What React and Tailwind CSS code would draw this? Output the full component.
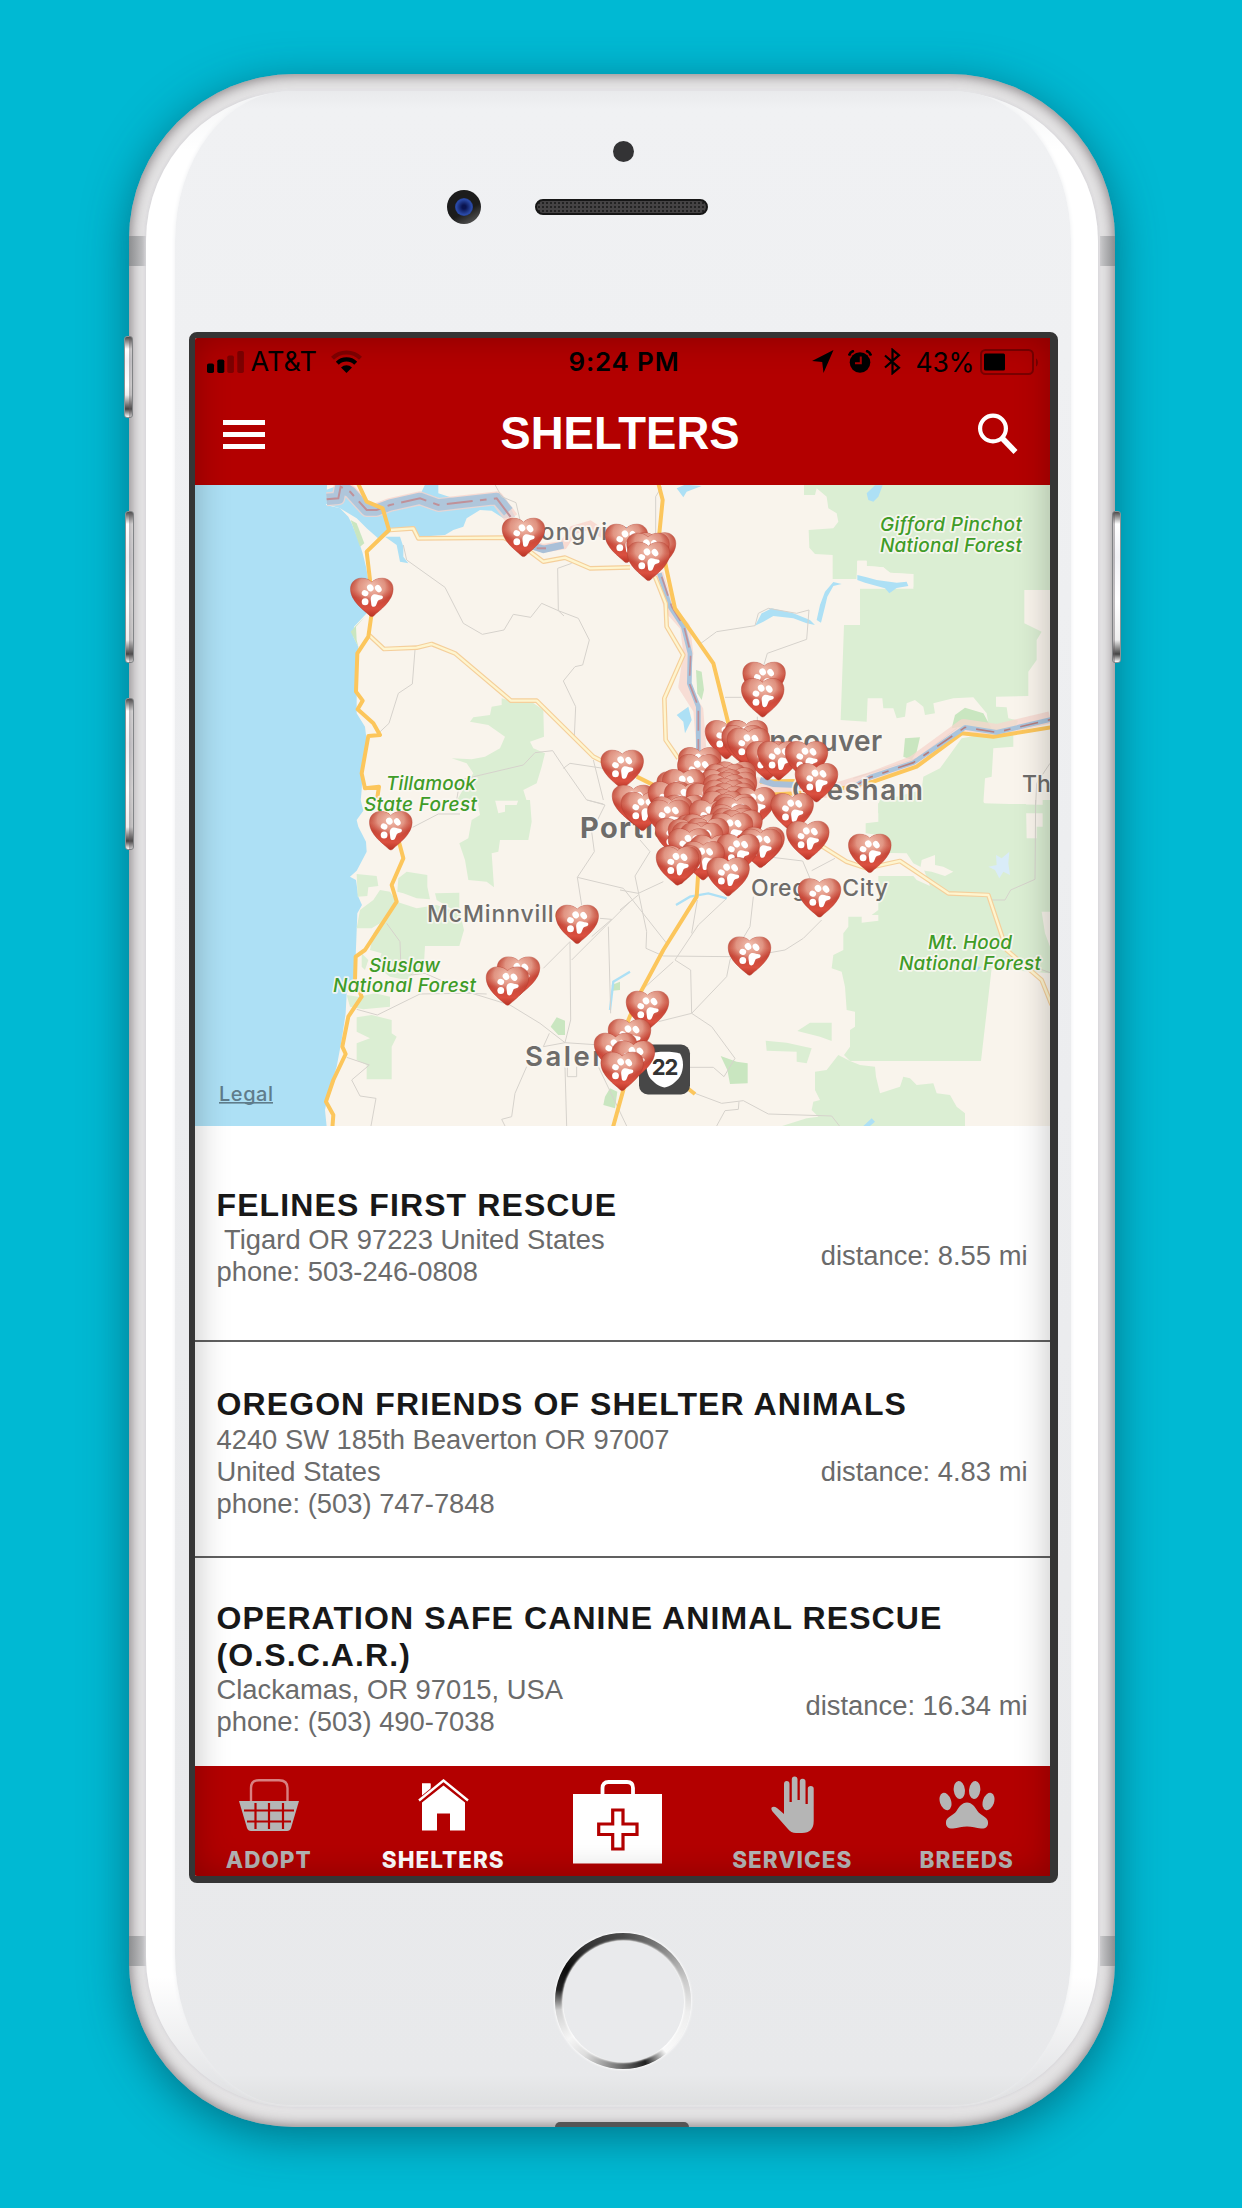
import React from "react";

const HEART =
  "M21.5 38.6C20.6 38.6 19.6 37.9 18.6 36.9C14 32.6 0.2 23 0.2 11.2C0.2 4.2 5 0.2 11.2 0.2C15.6 0.2 19 1.6 21.5 4.2C24 1.6 27.4 0.2 31.8 0.2C38 0.2 42.8 4.2 42.8 11.2C42.8 23 29 32.6 24.4 36.9C23.4 37.9 22.4 38.6 21.5 38.6Z";

// Left/top corner of every pin, in map coordinates, back to front.
const PINS = [
  [502, 518], [605, 524], [633, 532.5], [626.5, 533], [627, 542], [350.3, 578],
  [742.6, 662], [741.2, 678.4],
  [705, 720.3], [725, 720.3], [721.6, 725.3], [727, 728],
  [746, 741.3], [757.3, 741.3], [785, 741.3], [795, 763.3],
  [678.3, 747.4], [677.3, 754.3],
  [713, 761.5], [704, 764], [713, 767.5], [700, 769.5], [656.6, 771.5], [662.3, 769.3],
  [714, 772], [703, 774.5], [712, 778],
  [600.7, 750], [612, 785], [621, 792],
  [648, 781.6], [664, 782.6], [686, 783.3], [703, 780], [712, 783], [704, 786], [711, 789],
  [733, 787.3], [770.7, 793.3],
  [663, 795], [650, 796.6], [647.3, 800], [701, 791], [713, 794], [689, 800], [711, 800],
  [715, 797], [710, 804.5], [655, 818], [675, 815], [681, 814], [668, 819], [712, 808], [719.5, 810],
  [710, 813], [686, 818], [672, 822], [680, 823], [668, 828.5],
  [741.6, 827], [739, 829], [690, 835], [716.6, 834], [681.6, 841.3], [658.5, 845.5], [656, 846.6], [706.6, 857.3],
  [786.3, 821], [848.3, 834], [798, 878.5], [369.3, 811.3],
  [555.7, 905], [497, 956.7], [486, 966.7], [728, 936.7], [626, 991],
  [608, 1019], [594, 1033], [612, 1040.7], [600.7, 1052],
];

const SHELTERS = [
  {
    name: ["FELINES FIRST RESCUE"],
    address: ["\u00a0Tigard OR 97223 United States"],
    phone: "503-246-0808",
    distance: "8.55",
    box: "h-[216px] pt-[61px] border-b-2",
    body: "",
  },
  {
    name: ["OREGON FRIENDS OF SHELTER ANIMALS"],
    address: ["4240 SW 185th Beaverton OR 97007", "United States"],
    phone: "(503) 747-7848",
    distance: "4.83",
    box: "h-[216px] pt-[44px] border-b-2",
    body: "mt-px",
  },
  {
    name: ["OPERATION SAFE CANINE ANIMAL RESCUE", "(O.S.C.A.R.)"],
    address: ["Clackamas, OR 97015, USA"],
    phone: "(503) 490-7038",
    distance: "16.34",
    box: "h-[208px] pt-[42px]",
    body: "",
  },
];

function Pin({ x, y }) {
  return (
    <g transform={`translate(${x} ${y})`}>
      <path d={HEART} fill="url(#heart)" stroke="#b23a2c" strokeOpacity="0.55" strokeWidth="0.8" />
      <path d={HEART} fill="url(#gloss)" />
      <g fill="#fff">
        <ellipse cx="14.8" cy="15.2" rx="3.4" ry="3" transform="rotate(20 14.8 15.2)" />
        <ellipse cx="20" cy="9.8" rx="3.2" ry="3.6" transform="rotate(-30 20 9.8)" />
        <ellipse cx="28" cy="10.6" rx="3" ry="3.9" transform="rotate(-35 28 10.6)" />
        <ellipse cx="14.8" cy="23.8" rx="3.4" ry="3.5" />
        <path d="M21 18.500C22.500 15.600 25.500 16 28 17C30 17.600 32.600 17 32.600 19.200C32.600 21.400 29.600 21.400 28 22.400C26.400 23.600 26.600 28.600 23.600 28.800C21 29 21 26.400 20.800 24.400C20.600 22 20 20.600 21 18.500Z" />
      </g>
    </g>
  );
}

function Label({ x, y, w, size, weight = 600, fill = "#6e6c6a", italic, children }) {
  return (
    <text
      x={x}
      y={y}
      textLength={w}
      fontFamily="Inter, 'Liberation Sans', sans-serif"
      fontSize={size}
      fontWeight={weight}
      fontStyle={italic ? "italic" : "normal"}
      fill={fill}
      stroke="#fbf8f3"
      strokeOpacity="0.85"
      strokeWidth="3.5"
      strokeLinejoin="round"
      paintOrder="stroke"
    >
      {children}
    </text>
  );
}

function Forest({ x, y, w, children }) {
  return (
    <Label x={x} y={y} w={w} size="19" weight="500" italic fill="#3f9c28">
      {children}
    </Label>
  );
}

function Orange({ points }) {
  return <polyline points={points} fill="none" stroke="#fcc65c" strokeWidth="12" strokeLinejoin="round" />;
}

function Pale({ points }) {
  return (
    <g fill="none" strokeLinejoin="round">
      <polyline points={points} stroke="#f5cf9b" strokeWidth="14" />
      <polyline points={points} stroke="#fef5cf" strokeWidth="7" />
    </g>
  );
}

function ShelterMap() {
  const green = "#dbeed3";
  const darkGreen = "#c9e6c0";
  const water = "#ade0f5";
  return (
    <svg className="block h-[641px] w-[855px] shrink-0" viewBox="195 485 855 641">
      <defs>
        <linearGradient id="heart" x1="0" y1="0" x2="0" y2="1">
          <stop offset="0" stopColor="#b8402f" />
          <stop offset="0.3" stopColor="#cd5c4a" />
          <stop offset="0.5" stopColor="#c74637" />
          <stop offset="0.8" stopColor="#db5040" />
          <stop offset="1" stopColor="#b83224" />
        </linearGradient>
        <radialGradient id="gloss" cx="0.5" cy="0.22" r="0.52" gradientTransform="scale(1 0.92)">
          <stop offset="0" stopColor="#f6cdbd" stopOpacity="0.9" />
          <stop offset="0.6" stopColor="#efb7a5" stopOpacity="0.65" />
          <stop offset="1" stopColor="#e08070" stopOpacity="0" />
        </radialGradient>
      </defs>
      <rect x="195" y="485" width="855" height="641" fill="#f9f4ec" />

      {/* north-west */}
      <g transform="translate(190 480) scale(0.33333)">
        <polygon fill={water} points="0,0 412,0 408,75 450,85 475,110 485,130 505,180 518,220 528,260 535,300 530,400 492,440 490,470 505,500 500,640 500,700 525,740 530,780 520,830 515,930 512,962 0,962" />
        <polygon fill={water} points="408,30 450,14 480,14 530,75 590,80 640,50 690,45 705,14 745,14 745,40 800,58 930,40 950,60 975,110 940,115 905,92 870,90 830,115 820,140 790,150 765,165 690,170 668,140 610,150 570,180 530,145 500,115 450,85 408,72" />
        <polygon fill={water} points="585,170 630,170 640,200 640,230 655,250 630,245 620,195" />
        <polyline points="800,130 815,105 850,95" fill="none" stroke={water} strokeWidth="6" />
        <polyline points="410,58 445,55 452,20 480,35 530,90 560,90 600,75 690,55 745,75 920,55 965,115" fill="none" stroke="#f7d3cb" strokeOpacity="0.75" strokeWidth="42" strokeLinejoin="round" />
        <polyline points="410,58 445,55 452,20 480,35 530,90 560,90 600,75 690,55 745,75 920,55 955,95" fill="none" stroke="#a9c4dc" strokeOpacity="0.9" strokeWidth="34" strokeLinejoin="round" />
        <polyline points="410,58 445,55 452,20 480,35 530,90 560,90 600,75 690,55 745,75 920,55 965,115" fill="none" stroke="#c09199" strokeWidth="6" strokeDasharray="78 22 20 22" />
        <polyline points="1010,190 1060,205 1120,195 1150,150 1200,135 1280,190" fill="none" stroke="#f7d3cb" strokeOpacity="0.8" strokeWidth="26" />
        <polyline points="1020,195 1060,208 1120,195" fill="none" stroke="#a9c0d8" strokeWidth="22" />
        <polyline points="1040,205 1068,205" fill="none" stroke="#c09199" strokeWidth="6" />
        <polygon fill={darkGreen} points="482,120 500,130 523,190 510,200" />
        <polygon fill={darkGreen} points="525,410 495,440 482,455 505,500 500,480 498,440" />
        <polygon fill={green} points="935,655 960,662 1020,662 1060,690 1062,770 1020,785 1030,805 1065,820 1055,860 1040,910 1000,930 1010,962 800,962 830,910 850,880 830,850 785,835 845,838 885,830 930,805 945,770 895,735 840,725 850,712 900,705 905,680 935,675" />
        <g fill="none" stroke="#d6d2cc" strokeWidth="3">
          <polyline points="640,195 650,240 765,322 820,430 877,463 942,450 970,403 1022,412 1055,370 1105,392 1165,415 1198,480 1178,555 1155,560 1120,603 1157,680 1153,770" />
          <polyline points="1145,250 1103,265 1105,392 1122,408" />
          <polyline points="675,510 667,612 625,640 597,730 560,765" />
          <polyline points="800,960 810,900 860,888 1000,855 1035,818 1088,812 1120,860 1190,960 1240,972" />
          <polyline points="1120,865 1140,850 1240,865" />
          <polyline points="1210,840 1240,960" />
          <polyline points="915,14 935,50 978,68 990,120" />
        </g>
        <Pale points="600,150 670,145 685,175 940,173 1000,200 1060,245 1125,233 1200,265 1320,262" />
        <Pale points="537,465 582,507 680,503 725,492 795,520 963,662 1040,662 1210,830 1260,855" />
        <Orange points="503,8 530,65 578,85 597,150 530,215 540,300 545,400 535,470 502,520 498,635 518,662 503,688 550,730 570,765 535,768 515,880 525,925 567,920 560,965" />
      </g>

      {/* north-east */}
      <g transform="translate(620 480) scale(0.33333)">
        <polygon fill={green} points="552,12 1290,12 1290,330 1213,330 1213,430 1265,455 1250,480 1250,540 1225,575 1225,648 1128,650 1128,680 1160,682 1165,715 1195,722 1180,755 1180,800 1120,805 1115,890 1095,895 1090,970 1290,975 1290,1000 775,1000 775,970 830,950 905,930 910,890 960,865 1025,775 1110,760 1100,700 1060,652 1000,655 940,670 945,700 915,705 910,680 885,660 860,670 855,710 830,715 820,685 790,685 787,655 743,655 740,725 662,720 672,435 720,435 720,325 800,325 860,320 880,320 880,282 810,278 790,262 740,258 740,242 712,242 710,297 638,297 638,225 585,222 568,203 566,150 640,145 655,125 650,100 625,85 620,50 590,25 585,45 552,45" />
        <polygon fill={darkGreen} points="995,745 1005,705 1035,683 1090,700 1112,740 1120,755 1030,740" />
        <polygon fill={darkGreen} points="855,775 900,772 890,815 875,840 850,830" />
        <polygon fill={darkGreen} points="228,570 245,575 252,630 245,660 232,640" />
        <polygon fill={water} points="170,25 195,14 245,18 200,35 190,52" />
        <polygon fill={water} points="740,40 765,16 788,16 775,50 760,65 745,60" />
        <polygon fill="#f9f4ec" points="712,242 740,242 740,258 790,262 810,278 860,282 880,282 880,326 720,326 710,297" />
        <polygon fill={water} points="712,285 740,292 770,300 830,308 860,305 865,318 830,324 808,340 795,325 735,308 712,300" />
        <polygon fill={water} points="665,312 640,318 622,350 615,380 603,428 590,420 600,375 615,335 640,306" />
        <polygon fill={water} points="405,437 425,400 455,385 520,400 570,420 585,435 560,430 520,415 460,408 430,425" />
        <polygon fill={water} points="170,705 205,680 215,720 195,760 190,725" />
        <g fill="none" stroke="#d6d2cc" strokeWidth="3">
          <polyline points="107,160 107,50 125,20" />
          <polyline points="240,492 290,455 405,437 415,400 445,385 530,400 567,390 560,478 442,520 430,560" />
          <polyline points="315,652 365,652" />
          <polyline points="412,710 412,740" />
          <polyline points="700,895 890,835 1010,745" />
          <polyline points="1290,850 1250,910 1247,975" />
        </g>
        <polyline points="115,280 150,390 195,440 205,520 190,620 235,690 245,820" fill="none" stroke="#f6d6cd" strokeOpacity="0.75" strokeWidth="30" strokeLinejoin="round" />
        <polyline points="118,280 150,380 190,440 210,520 208,610 235,680 235,820" fill="none" stroke="#a9c4dc" strokeWidth="14" strokeLinejoin="round" />
        <polyline points="125,290 155,380 192,440 212,520 208,610 235,680 235,820" fill="none" stroke="#c09199" strokeWidth="5" strokeDasharray="60 25" />
        <Pale points="105,290 137,370 140,440 190,525 133,655 137,780 175,835" />
        <polyline points="380,900 430,915 520,930 620,935 750,895 880,845 1030,735 1130,750 1290,712" fill="none" stroke="#f6d6cd" strokeOpacity="0.75" strokeWidth="36" strokeLinejoin="round" />
        <Orange points="115,10 128,60 118,160 140,270 165,385 280,550 325,730 400,900 230,1160" />
        <Orange points="420,905 520,903 560,930" />
        <Orange points="420,945 620,935 760,905 890,860 1025,760 1120,770 1295,742" />
        <Orange points="50,890 110,920" />
        <polyline points="420,900 460,912 530,915 590,925" fill="none" stroke="#a9c0d8" strokeWidth="18" />
        <polyline points="710,915 750,892 880,848 1035,742 1130,757 1295,718" fill="none" stroke="#a9c4dc" strokeWidth="14" strokeLinejoin="round" />
        <polyline points="710,915 750,892 880,848 1035,742 1130,757 1295,718" fill="none" stroke="#b57f80" strokeWidth="5" strokeDasharray="55 30 20 30" />
      </g>

      {/* south-west */}
      <g transform="translate(190 800) scale(0.33333)">
        <polygon fill={water} points="0,0 512,0 520,32 500,60 505,80 528,125 530,155 512,190 500,212 480,230 498,240 505,290 516,315 502,340 497,470 490,540 470,580 467,640 455,720 440,800 415,880 405,930 410,980 0,980" />
        <polygon fill={green} points="862,0 915,0 925,40 945,35 945,15 980,15 985,0 1020,0 1025,65 1015,120 930,120 925,155 905,160 912,262 890,245 835,240 825,180 808,130 835,115 845,60 870,45" />
        <polygon fill={green} points="500,222 560,228 565,258 535,262 532,288 503,290" />
        <polygon fill={green} points="625,235 650,215 712,225 712,260 720,298 680,295 640,280 622,275" />
        <polygon fill={green} points="735,280 808,278 808,330 790,330 740,300" />
        <polygon fill={green} points="500,385 510,330 550,300 570,270 600,275 620,305 680,325 740,315 780,330 808,330 822,390 808,438 705,438 702,490 650,540 600,530 560,500 575,460 540,450 550,400 570,370 545,385" />
        <polygon fill={green} points="515,460 535,480 525,510 515,500" />
        <polygon fill={green} points="470,585 505,590 555,580 600,590 600,620 520,628 480,620" />
        <polygon fill={green} points="500,652 545,645 605,660 605,700 620,710 605,740 605,838 530,838 530,795 500,780 500,730 540,715 500,695" />
        <polygon fill={darkGreen} points="1082,680 1100,652 1125,662 1125,705 1105,705" />
        <polygon fill={darkGreen} points="1245,890 1260,865 1282,875 1275,925 1240,915" />
        <polygon fill={darkGreen} points="1265,555 1290,545 1290,570 1268,572" />
        <polyline points="1320,515 1270,545 1260,630" fill="none" stroke={water} strokeWidth="7" />
        <g fill="none" stroke="#d6d2cc" strokeWidth="3">
          <polyline points="668,82 745,42 810,42" />
          <polyline points="590,370 630,425 632,480 665,525 705,520 830,575 960,615 1050,670 1125,728 1230,735" />
          <polyline points="500,628 562,645 690,582 830,580 890,582" />
          <polyline points="470,772 538,795 485,840 510,888 558,895 543,978" />
          <polyline points="1192,0 1245,15 1205,95 1213,155 1162,232 1175,315" />
          <polyline points="1162,232 1300,265 1430,430" />
          <polyline points="1060,505 1140,425 1142,660 1125,728 1060,740 1078,700" />
          <polyline points="1320,305 1145,480" />
          <polyline points="1230,355 1265,358 1205,410" />
          <polyline points="1255,380 1262,640" />
          <polyline points="1010,800 975,880 965,950 935,958 945,978" />
          <polyline points="1125,800 1130,978" />
          <polyline points="1132,800 1132,830 1160,830 1160,800" />
          <polyline points="1225,800 1310,978" />
        </g>
        <Orange points="585,30 600,60 628,130 640,175 605,255 620,305 525,450 497,470 495,540 515,590 475,650 457,740 467,762 430,840 408,905 430,945 427,985" />
      </g>

      {/* south-east */}
      <g transform="translate(620 800) scale(0.33333)">
        <polygon fill={green} points="775,12 780,0 1085,0 1095,12 1218,12 1220,115 1250,115 1250,80 1268,80 1268,0 1290,0 1290,335 1265,335 1275,400 1290,440 1290,520 1115,505 1083,783 690,783 672,765 690,740 690,690 705,680 705,635 680,630 675,560 665,515 635,505 640,465 670,450 670,400 685,380 685,350 725,350 725,368 775,362 775,345 755,345 775,330 775,228 880,228 890,240 930,258 910,205 880,190 860,160 775,158 775,105 737,100 737,70 775,65" />
        <polygon fill="#f9f4ec" points="905,180 945,165 945,195 970,200 1000,215 975,228 935,215 900,210" />
        <polygon fill={green} points="655,765 690,783 720,795 765,800 768,830 780,880 840,860 850,830 870,835 890,855 940,850 950,880 990,885 1010,920 1035,940 1035,980 480,980 560,955 595,950 575,930 580,905 600,900 585,870 585,815 620,810" />
        <polygon fill={green} points="437,722 500,728 575,745 560,790 530,785 530,755 440,752" />
        <polygon fill={green} points="532,693 570,668 635,668 635,723 600,710" />
        <polygon fill={darkGreen} points="302,768 350,785 383,790 383,850 330,852 322,810" />
        <polygon fill="#d9ecf8" points="1105,200 1130,195 1128,165 1145,175 1168,155 1165,190 1170,225 1150,215 1138,235 1125,210" />
        <polygon fill={water} points="730,978 755,955 765,965 750,978" />
        <polygon fill={water} points="1050,500 1085,500 1070,515" />
        <g fill="none" stroke="#d6d2cc" strokeWidth="3">
          <polyline points="60,120 90,155 45,228 80,395 78,445 130,468 330,470" />
          <polyline points="0,270 55,280 130,245" />
          <polyline points="0,330 55,285" />
          <polyline points="320,295 235,375 165,480 212,510 215,640" />
          <polyline points="232,300 215,400" />
          <polyline points="60,575 160,485" />
          <polyline points="400,290 390,380 330,480 320,530 215,640 115,665" />
          <polyline points="215,640 275,680 345,775 312,830 280,802 210,802" />
          <polyline points="605,360 550,415 495,450 450,458" />
          <polyline points="440,170 548,183 570,235" />
          <polyline points="575,212 645,175" />
          <polyline points="1247,0 1245,238 1172,270 1155,300 1115,300" />
          <polyline points="225,880 305,910 370,902 445,942 635,948 660,980" />
          <polyline points="357,905 355,928 315,932 290,978" />
          <polyline points="1160,470 1290,518" />
        </g>
        <polyline points="168,315 210,290 265,280 320,295" fill="none" stroke={water} strokeWidth="7" />
        <Pale points="600,135 680,185 740,205 840,183 985,280 1105,285 1160,450 1265,540 1295,615" />
        <Orange points="236,200 230,290 130,450 60,580 25,660 10,870 -22,985" />
        <Orange points="190,855 225,882" />
      </g>

      <Label x="526" y="540" size="23" weight="500" w="116">Longview</Label>
      <Label x="734" y="751" size="28" w="148">Vancouver</Label>
      <Label x="792" y="800" size="28" w="131">Gresham</Label>
      <Label x="1022" y="792" size="23" weight="500">Th</Label>
      <Label x="751" y="896" size="23" weight="500" w="137">Oregon City</Label>
      <Label x="427" y="922" size="23" weight="500" w="141">McMinnville</Label>
      <Label x="525" y="1065.500" size="27.500" w="92">Salem</Label>
      <Label x="580" y="838" size="29" weight="700" w="130">Portland</Label>

      <Forest x="880" y="530.5" w="142">Gifford Pinchot</Forest>
      <Forest x="880" y="551.5" w="142">National Forest</Forest>
      <Forest x="386" y="790" w="90">Tillamook</Forest>
      <Forest x="364" y="810.5" w="113">State Forest</Forest>
      <Forest x="369" y="971.5" w="71">Siuslaw</Forest>
      <Forest x="333" y="992" w="143">National Forest</Forest>
      <Forest x="928" y="949" w="84">Mt. Hood</Forest>
      <Forest x="899" y="970" w="142">National Forest</Forest>

      <text x="219" y="1101" textLength="54" fontFamily="Inter, sans-serif" fontSize="20" fontWeight="500" fill="#5f7c8b">Legal</text>
      <rect x="219" y="1102" width="54" height="1.600" fill="#5f7c8b" />

      <rect x="639" y="1044.500" width="51" height="50" rx="9" fill="#474747" />
      <path d="M650 1053.500C656 1051 674 1051 680 1053.500C684 1059.500 684 1069.500 680 1076.500C676 1082.500 670 1086.500 664.500 1087.500C659 1086.500 653 1082.500 649 1076.500C645.500 1069.500 645.500 1059.500 650 1053.500Z" fill="#fff" />
      <text x="664.5" y="1075" textAnchor="middle" fontFamily="Inter, sans-serif" fontSize="22" fontWeight="700" letterSpacing="-1" fill="#333">22</text>

      {PINS.map(([x, y], i) => (
        <Pin key={i} x={x} y={y} />
      ))}
    </svg>
  );
}

function StatusBar() {
  return (
    <div className="flex h-[37px] items-center pt-[10px] pl-[12px] pr-[10px] font-[Inter,sans-serif] text-[26px] leading-[30px] text-black">
      <div className="flex w-[300px] items-center">
        <svg className="h-[22px] w-[38px]" viewBox="0 0 38 22">
          <rect x="0" y="12.500" width="7" height="9.500" rx="1.800" />
          <rect x="10.300" y="8.500" width="7" height="13.500" rx="1.800" />
          <rect x="20.300" y="4.500" width="6.600" height="17.500" rx="1.800" fill="#7d0000" />
          <rect x="30.300" y="0" width="6.600" height="22" rx="1.800" fill="#7d0000" />
        </svg>
        <span className="ml-[6px] w-[67px] text-[27px] tracking-[0.100px]">AT&amp;T</span>
        <svg className="ml-[13px] h-[23px] w-[31px]" viewBox="0 0 31 23" fill="none">
          <path d="M1.500 8.200A20 20 0 0 1 29.500 8.200" stroke="#800000" strokeWidth="4.200" />
          <path d="M6.300 13.200A13 13 0 0 1 24.700 13.200" stroke="#000" strokeWidth="4.200" />
          <path d="M15.500 23L10 17.500A8 8 0 0 1 21 17.500Z" fill="#000" />
        </svg>
      </div>
      <span className="ml-[62px] w-[120px] whitespace-nowrap font-semibold tracking-[0.800px]">9:24 PM</span>
      <div className="ml-auto flex items-center">
        <svg className="h-[23px] w-[22px]" viewBox="0 0 22 23"><path d="M21.500 0L11.500 23L10.200 12L0 11Z" /></svg>
        <svg className="ml-[14px] h-[23px] w-[24px]" viewBox="0 0 24 23">
          <circle cx="12" cy="12.500" r="10.300" />
          <path d="M1 5.500A7 7 0 0 1 6 0.800M23 5.500A7 7 0 0 0 18 0.800" fill="none" stroke="#000" strokeWidth="2.600" />
          <path d="M12.800 6.500V13.200H7" fill="none" stroke="#a80000" strokeWidth="2" />
        </svg>
        <svg className="ml-[12px] h-[27px] w-[17px]" viewBox="0 0 17 27">
          <path d="M1 7.500L15 19.800L8.500 25.200V1.800L15 7.200L1 19.500" fill="none" stroke="#000" strokeWidth="2.200" />
        </svg>
        <span className="ml-[15px] w-[59px] text-[26.500px] tracking-[-0.200px]">43%</span>
        <svg className="ml-[5px] h-[26px] w-[60px]" viewBox="0 0 60 26">
          <rect x="1" y="1" width="52" height="24" rx="4.500" fill="none" stroke="#7a0000" strokeWidth="2" />
          <rect x="4" y="4.500" width="21" height="17" rx="1.500" />
          <path d="M56 9.500C58.500 10.500 58.500 16.500 56 17.500Z" fill="#7a0000" />
        </svg>
      </div>
    </div>
  );
}

function Header() {
  return (
    <header className="h-[147px] shrink-0 bg-[#b30000]">
      <StatusBar />
      <div className="flex h-[110px] items-center justify-between pt-[8px] pr-[31px] pl-[28px]">
        <div className="flex w-[42px] flex-col gap-[7px]">
          <span className="h-[5px] bg-white" />
          <span className="h-[5px] bg-white" />
          <span className="h-[5px] bg-white" />
        </div>
        <h1 className="mr-[2px] pb-px text-[45.500px] leading-[50px] font-bold text-white">SHELTERS</h1>
        <svg className="mb-[3px] h-[42px] w-[41px]" viewBox="0 0 41 42" fill="none" stroke="#fff">
          <circle cx="16" cy="16.500" r="12.900" strokeWidth="4.200" />
          <path d="M25.500 26.500L38.500 40" strokeWidth="5.600" />
        </svg>
      </div>
    </header>
  );
}

function ShelterRow({ name, address, phone, distance, box, body }) {
  return (
    <li className={`${box} shrink-0 border-[#606060] px-[22px]`}>
      <h2 className="text-[32px] leading-[37px] font-bold tracking-[1.100px] text-[#181818]">
        {name.map((line) => (
          <span key={line} className="block whitespace-nowrap">{line}</span>
        ))}
      </h2>
      <div className={`${body} flex items-center justify-between text-[27.350px] leading-[32px] text-[#6b6b6b]`}>
        <div>
          {address.map((line) => (
            <p key={line} className="whitespace-nowrap">{line}</p>
          ))}
          <p>phone: {phone}</p>
        </div>
        <p>distance: {distance} mi</p>
      </div>
    </li>
  );
}

function BasketIcon() {
  return (
    <svg className="h-[53px] w-[60px]" viewBox="0 0 60 53">
      <path d="M12 23V9Q12 1.200 20 1.200H40Q48.500 1.200 48.500 9V23" fill="none" stroke="#d88080" strokeWidth="2.400" />
      <path d="M0 22H60L52 49Q51 52 48 52H12Q9 52 8 49Z" fill="#b5b5b5" />
      <path d="M5 31.500H55M8 42.500H52M16.500 24V50M30 24V50M44 24V50" stroke="#b30000" strokeWidth="2.200" />
    </svg>
  );
}

function HouseIcon() {
  return (
    <svg className="h-[52px] w-[51px]" viewBox="0 0 51 52" fill="#fff">
      <path d="M4 23.500L25.500 6.500L47 23.500V51.500H32V34.500H19V51.500H4Z" />
      <path d="M4 4.500H12.500V11L4 18Z" />
      <path d="M1 21.500L25.500 1.500L50 21.500" fill="none" stroke="#b30000" strokeWidth="5.500" />
      <path d="M1 21.500L25.500 1.500L50 21.500" fill="none" stroke="#fff" strokeWidth="2.400" />
      <path d="M4 4.500H12.500V9.500L4 16.500Z" />
    </svg>
  );
}

function HandIcon() {
  return (
    <svg className="h-[58px] w-[43px]" viewBox="0 0 43 58" fill="#b5b5b5">
      <path d="M13 38V8Q13 5 15.700 5Q18.500 5 18.500 8V26H20.800V3.500Q20.800 0.500 23.600 0.500Q26.500 0.500 26.500 3.500V24H28.800V5.500Q28.800 2.800 31.500 2.800Q34.500 2.800 34.500 5.500V28H36.800V12.500Q36.800 10 39.700 10Q42.700 10 42.700 12.500V45Q42.700 57 31 57H25Q20 57 16.500 52.500L1.500 35.500Q-0.500 32.500 1 31.300Q3 30 6 32Z" />
    </svg>
  );
}

function PawIcon() {
  return (
    <svg className="h-[48px] w-[56px]" viewBox="0 0 56 48" fill="#b5b5b5">
      <ellipse cx="6.500" cy="20.500" rx="5.600" ry="9" transform="rotate(-18 6.500 20.500)" />
      <ellipse cx="20.300" cy="9" rx="5.600" ry="9" transform="rotate(-6 20.300 9)" />
      <ellipse cx="35.700" cy="9" rx="5.600" ry="9" transform="rotate(6 35.700 9)" />
      <ellipse cx="49.500" cy="20.500" rx="5.600" ry="9" transform="rotate(18 49.500 20.500)" />
      <path d="M28 21.500C33 21.500 36 26 38.500 30C41 34 49 36 49 41C49.500 46 46 48 42 47.500C37 47 33 45.500 28 45.500C23 45.500 19 47 14 47.500C10 48 6.500 46 7 41C7 36 15 34 17.500 30C20 26 23 21.500 28 21.500Z" />
    </svg>
  );
}

function KitIcon() {
  return (
    <svg className="h-[84px] w-[89px]" viewBox="0 0 89 84">
      <path d="M29.500 15V8Q29.500 2 35.500 2H54Q60 2 60 8V15" fill="none" stroke="#fff" strokeWidth="3.800" />
      <rect y="14" width="89" height="69.500" fill="#fff" />
      <path d="M39.700 30H50V44H64V54.500H50V69H39.700V54.500H25.700V44H39.700Z" fill="#fff" stroke="#b30000" strokeWidth="3.200" />
    </svg>
  );
}

function Tab({ icon, label, active }) {
  return (
    <div className="flex w-[174.500px] shrink-0 flex-col items-center justify-between pb-[4px]">
      <div className="flex h-[74px] items-center">{icon}</div>
      <span className={`text-[22.500px] leading-[24px] font-extrabold tracking-[1px] ${active ? "text-white" : "text-[#b5b5b5]"}`}>{label}</span>
    </div>
  );
}

function TabBar() {
  return (
    <nav className="flex h-[110px] shrink-0 bg-[#b30000] font-[Inter,sans-serif]">
      <div className="-ml-[13px] flex pt-[2px]">
        <Tab icon={<BasketIcon />} label="ADOPT" />
        <Tab icon={<HouseIcon />} label="SHELTERS" active />
        <div className="flex w-[174.500px] shrink-0 justify-center pt-[12px]">
          <KitIcon />
        </div>
        <Tab icon={<HandIcon />} label="SERVICES" />
        <Tab icon={<PawIcon />} label="BREEDS" />
      </div>
    </nav>
  );
}

function SideButton({ place }) {
  return (
    <div className={`absolute w-[9px] rounded-[3px] border border-[#8d9396] bg-[linear-gradient(180deg,#4a4a4a_0,#ffffff_12px,#f1f1f5_30%,#ffffff_60%,#eeeeee_calc(100%-22px),#444_calc(100%-8px),#fff_100%)] ${place}`} />
  );
}

export default function App() {
  return (
    <main className="flex h-[2208px] w-[1242px] overflow-hidden bg-[#00b9d3] pt-[74px] pl-[129px] font-['Liberation_Sans',Arial,sans-serif]">
      <div className="relative h-[2053px] w-[986px] rounded-[165px] bg-[#e4e3e4] px-[17px] pt-[17px] shadow-[0_10px_45px_rgba(0,60,75,0.55)]">
        <SideButton place="-left-[5px] top-[262px] h-[82px]" />
        <SideButton place="-left-[4px] top-[437px] h-[152px]" />
        <SideButton place="-left-[4px] top-[624px] h-[152px]" />
        <SideButton place="-right-[6px] top-[437px] h-[152px]" />
        <div className="absolute inset-0 rounded-[165px] shadow-[inset_0_0_12px_2px_rgba(100,92,95,0.7)]" />
        <div className="absolute top-[162px] left-0 h-[30px] w-[17px] bg-linear-to-r from-[#8d8e90] to-[#c9c9cb]" />
        <div className="absolute top-[162px] right-0 h-[30px] w-[15px] bg-linear-to-l from-[#8d8e90] to-[#c9c9cb]" />
        <div className="absolute top-[1862px] left-0 h-[30px] w-[17px] bg-linear-to-r from-[#8d8e90] to-[#c9c9cb]" />
        <div className="absolute top-[1862px] right-0 h-[30px] w-[15px] bg-linear-to-l from-[#8d8e90] to-[#c9c9cb]" />
        <div className="absolute bottom-0 left-[426px] h-[5px] w-[134px] rounded-t-[5px] bg-[#555]" />

        <div className="relative h-[2016px] w-[952px] rounded-[150px] bg-[linear-gradient(180deg,#f4f5f6_0,#ffffff_60px,#ffffff_calc(100%-130px),#e4e5e7_calc(100%-25px),#dededf_100%)] px-[29px] shadow-[0_0_3px_1px_#d6d5d9]">
          <div className="flex h-[2014px] w-[896px] flex-col items-center rounded-[115px/150px] bg-[linear-gradient(180deg,#e9eaec_0,#f0f1f3_18px,#e8e9eb_calc(100%-30px),#dfe0e1_100%)] shadow-[0_0_4px_#eeeff1]">
            <div className="mt-[50px] h-[21px] w-[21px] rounded-full bg-[#333335]" />
            <div className="mt-[28px] flex w-full items-center pl-[272px]">
              <div className="flex h-[34px] w-[34px] items-center justify-center rounded-full bg-[linear-gradient(150deg,#1c1c1c_60%,#666)]">
                <div className="h-[18px] w-[18px] rounded-full bg-[radial-gradient(circle_at_50%_50%,#0a1450_15%,#2a4aa8_60%,#16275c)]" />
              </div>
              <div className="ml-[54px] h-[16px] w-[173px] rounded-full border-2 border-[#161616] bg-[#454344] bg-[radial-gradient(#222_35%,transparent_40%)] bg-[size:4px_4px]" />
            </div>

            <div className="relative mt-[108px] flex h-[1551px] w-[869px] shrink-0 flex-col overflow-hidden rounded-[8px] border-t-[6px] border-r-[8px] border-b-[7px] border-l-[6px] border-[#353535] bg-white">
              <Header />
              <ShelterMap />
              <ul className="flex flex-col">
                {SHELTERS.map((s) => (
                  <ShelterRow key={s.phone} {...s} />
                ))}
              </ul>
              <TabBar />
              <div className="pointer-events-none absolute inset-0 shadow-[inset_0_0_34px_rgba(0,0,0,0.25)]" />
            </div>

            <div className="mt-[50px] flex h-[136px] w-[136px] items-center justify-center rounded-full bg-[conic-gradient(#4a4a4a_0deg,#777_30deg,#c8c8c8_70deg,#eee_100deg,#fafafa_140deg,#202020_160deg,#777_185deg,#ddd_215deg,#f6f6f6_235deg,#d0d0d0_262deg,#222_280deg,#0c0c0c_300deg,#333_325deg,#4a4a4a_360deg)] shadow-[0_0_2px_1px_#fafafa]">
              <div className="h-[121px] w-[121px] rounded-full bg-[#e9eaec] shadow-[0_0_2px_1px_#fff]" />
            </div>
          </div>
        </div>
      </div>
    </main>
  );
}
